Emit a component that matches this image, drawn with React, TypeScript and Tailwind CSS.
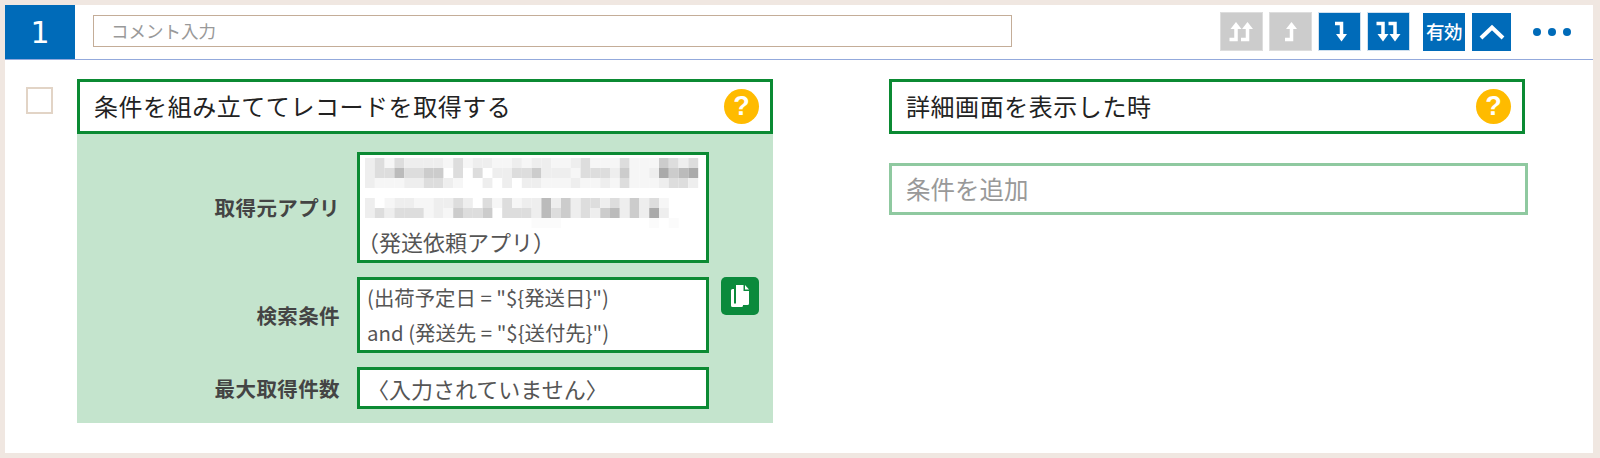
const jp = "font-['Noto_Sans_CJK_JP','Noto_Sans',sans-serif]"

const mosaicRows = [
  { y: 0, cells: "edfdeeeefdfeeffefeeffedfffdfffcded" },
  { y: 10, cells: "eddbddcc.d.d.eeddceeefdddecffeacba" },
  { y: 20, cells: "efffeeddef..e.e.eefffeffefdfffedde" },
  { y: 40, cells: "e.feeffeede.dfdfeebeceddedecedf" },
  { y: 50, cells: "ededddfefcddc.dddebdcedecbeceae" },
  { y: 60, cells: ".................fff.........f.f." },
]

function BlurredName() {
  return (
    <svg width="334" height="70" className="block" aria-hidden="true">
      {mosaicRows.map((row) =>
        row.cells.split("").map((c, i) =>
          c === "." ? null : (
            <rect
              key={`${row.y}-${i}`}
              x={i * 9.8}
              y={row.y}
              width="9.8"
              height="10"
              fill={row.y === 60 ? "#fbfbfb" : c === "f" ? "#f6f6f6" : `#${c}${c}${c}`}
            />
          )
        )
      )}
    </svg>
  )
}

function UpArrow({ x }: { x: number }) {
  return (
    <>
      <path d={`M${x - 6.5} 26.5H${x}V15`} fill="none" stroke="white" strokeWidth="3.5" />
      <path d={`M${x - 5.5} 16L${x} 9L${x + 5.5} 16Z`} fill="white" />
    </>
  )
}

function DownArrow({ x }: { x: number }) {
  return (
    <>
      <path d={`M${x - 6.5} 10.5H${x}V22`} fill="none" stroke="white" strokeWidth="3.5" />
      <path d={`M${x - 5.5} 21L${x} 28.5L${x + 5.5} 21Z`} fill="white" />
    </>
  )
}

function MoveButton({ disabled, children }: { disabled?: boolean; children: React.ReactNode }) {
  return (
    <div className={`w-[43px] h-[39px] border ${disabled ? "bg-[#cccccc] border-[#dddddd]" : "bg-[#006bb9] border-[#cfe0ef]"}`}>
      <svg width="41" height="37" viewBox="0 0 41 37" className="block">
        {children}
      </svg>
    </div>
  )
}

function HelpIcon() {
  return (
    <div className="w-[35px] h-[35px] rounded-full bg-[#ffbb00] flex items-center justify-center text-white font-bold text-[27px] leading-none font-['Liberation_Sans',sans-serif]">
      ?
    </div>
  )
}

function Heading({ title, width }: { title: string; width: string }) {
  return (
    <div className={`${width} h-[55px] border-[3px] border-[#0b8a33] flex items-center justify-between pl-[14px] pr-[11px]`}>
      <span className="text-[24px] tracking-[0.55px] text-[#222222] -mt-[1px]">{title}</span>
      <HelpIcon />
    </div>
  )
}

function Row({ label, children, extra }: { label: string; children: React.ReactNode; extra?: React.ReactNode }) {
  return (
    <div className="flex items-center">
      <div className="w-[263px] text-right font-bold text-[20.5px] tracking-[0.4px] text-[#444444] shrink-0">{label}</div>
      <div className="ml-[17px] w-[352px] border-[3px] border-[#0b8a33] bg-white text-[#555555] shrink-0">
        {children}
      </div>
      {extra}
    </div>
  )
}

export default function App() {
  return (
    <div className={`w-[1600px] h-[458px] bg-[#f0e7e1] p-[5px] ${jp}`}>
      <div className="w-[1588px] h-[448px] bg-white">
        <div className="h-[55px] flex items-center border-b border-[#93a9dc]">
          <div className="w-[70px] h-[54px] bg-[#006bb9] text-white text-[30px] flex items-center justify-center font-['DejaVu_Sans',sans-serif]">
            1
          </div>
          <div className="ml-[18px] w-[919px] h-[32px] mb-[2px] border border-[#c4ad98] pl-[17px] flex items-center text-[17.5px] text-[#999999]">
            コメント入力
          </div>
          <div className="ml-[208px] flex items-center mb-[1px]">
            <div className="flex gap-[6px]">
              <MoveButton disabled>
                <UpArrow x={15} />
                <UpArrow x={26.5} />
              </MoveButton>
              <MoveButton disabled>
                <UpArrow x={21.5} />
              </MoveButton>
              <MoveButton>
                <DownArrow x={22.5} />
              </MoveButton>
              <MoveButton>
                <DownArrow x={15} />
                <DownArrow x={27} />
              </MoveButton>
            </div>
            <div className="ml-[13px] w-[42px] h-[38px] bg-[#006bb9] text-white text-[18.5px] tracking-[-0.5px] font-medium flex items-center justify-center">
              有効
            </div>
            <div className="ml-[7px] w-[39px] h-[38px] bg-[#006bb9] flex items-center justify-center">
              <svg width="26" height="16" viewBox="0 0 26 16">
                <path d="M2 14L13 3.5L24 14" fill="none" stroke="white" strokeWidth="4" />
              </svg>
            </div>
            <div className="ml-[22px] flex gap-[7px]">
              <div className="w-[8px] h-[8px] rounded-full bg-[#006bb9]" />
              <div className="w-[8px] h-[8px] rounded-full bg-[#006bb9]" />
              <div className="w-[8px] h-[8px] rounded-full bg-[#006bb9]" />
            </div>
          </div>
        </div>

        <div className="flex pt-[19px]">
          <div className="ml-[21px] mt-[8px] w-[27px] h-[27px] border-2 border-[#e2d4c6]" />
          <div className="ml-[24px] w-[696px]">
            <Heading title="条件を組み立ててレコードを取得する" width="w-[696px]" />
            <div className="bg-[#c4e4cd] h-[289px] pt-[18px] flex flex-col gap-[14px]">
              <Row label="取得元アプリ">
                <div className="h-[105px] pt-[3px] pl-[5px]">
                  <BlurredName />
                  <div className="-ml-[8px] leading-[30px] -mt-[2px] text-[22px]">（発送依頼アプリ）</div>
                </div>
              </Row>
              <Row
                label="検索条件"
                extra={
                  <div className="ml-[12px] w-[38px] h-[38px] -mt-[39px] rounded-[5px] bg-[#0b8a3c] flex items-center justify-center">
                    <svg width="22" height="26" viewBox="0 0 22 26">
                      <path d="M2 7.5a1.5 1.5 0 0 1 1.5-1.5H5V20.5H14v2a1.5 1.5 0 0 1-1.5 1.5h-9A1.5 1.5 0 0 1 2 22.5Z" fill="white" />
                      <path d="M7 2h7.5v6H20v12.5a1.5 1.5 0 0 1-1.5 1.5H7Z" fill="white" />
                      <path d="M16 2l4 4.5h-4Z" fill="white" />
                    </svg>
                  </div>
                }
              >
                <div className="h-[70px] pl-[7px] leading-[35px] text-[20.4px]">
                  <div>(出荷予定日 = "{"${発送日}"}")</div>
                  <div>and (発送先 = "{"${送付先}"}")</div>
                </div>
              </Row>
              <Row label="最大取得件数">
                <div className="h-[36px] pl-[7px] leading-[36px] text-[22px]">〈入力されていません〉</div>
              </Row>
            </div>
          </div>
          <div className="ml-[116px] w-[639px]">
            <Heading title="詳細画面を表示した時" width="w-[636px]" />
            <div className="mt-[29px] h-[52px] border-[3px] border-[#8fc9a0] pl-[14px] flex items-center text-[24.5px] text-[#999999]">
              条件を追加
            </div>
          </div>
        </div>
      </div>
    </div>
  )
}
